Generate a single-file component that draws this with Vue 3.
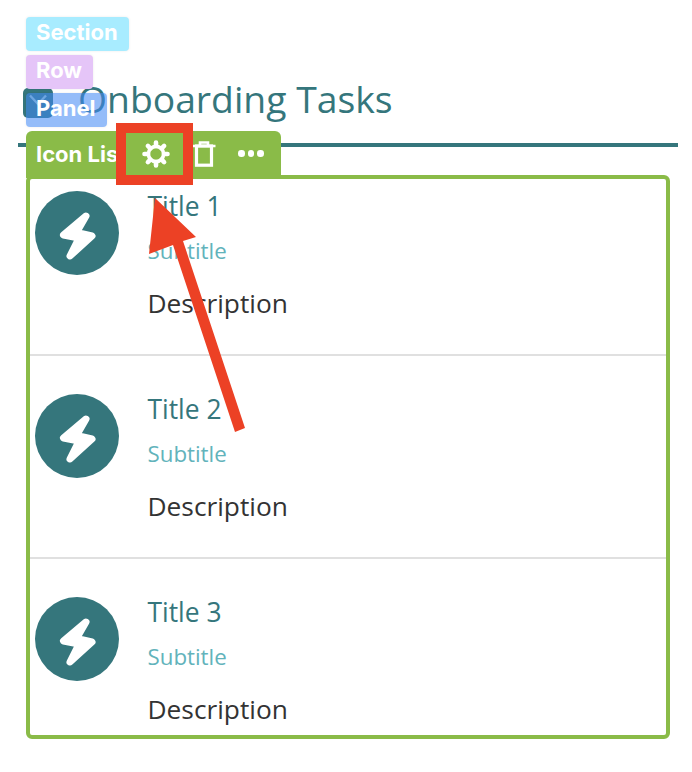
<script setup>
// De drie rijen van de lijst
const items = [
  { id: 1, title: 'Title 1' },
  { id: 2, title: 'Title 2' },
  { id: 3, title: 'Title 3' }
]
</script>

<template>
  <div class="page">
    <!-- Kop -->
    <h1 class="heading">Onboarding Tasks</h1>
    <div class="rule"></div>

    <!-- Lijst met rijen -->
    <div class="list">
      <div v-for="item in items" :key="item.id" class="row">
        <div class="avatar">
          <svg width="84" height="84" viewBox="0 0 84 84">
            <path d="M51 25 L28.5 44 L44 47 L35 65 L57 45 L41.5 41.5 Z" fill="#fff" stroke="#fff" stroke-width="7" stroke-linejoin="round" />
          </svg>
        </div>
        <div class="text">
          <div class="title">{{ item.title }}</div>
          <div class="subtitle">Subtitle</div>
          <div class="description">Description</div>
        </div>
      </div>
    </div>

    <!-- Checkbox ligt onder de labels -->
    <div class="check">
      <svg width="20" height="20" viewBox="0 0 20 20">
        <path d="M2 3.5 L10 12 L18 3.5" fill="none" stroke="#a8ccc6" stroke-width="2.4" />
      </svg>
    </div>

    <!-- Editor labels -->
    <div class="tags">
      <span class="tag section">Section</span>
      <span class="tag rowtag">Row</span>
      <span class="tag panel">Panel</span>
    </div>

    <!-- Groene toolbar -->
    <div class="toolbar">
      <span class="tool-name">Icon List</span>
      <div class="tool gear">
        <svg width="30" height="30" viewBox="0 0 30 30">
          <g stroke="#fff" stroke-width="4.6" stroke-linecap="round">
            <path d="M15 3.5V7M15 23V26.5M3.5 15H7M23 15H26.5M6.9 6.9L9.3 9.3M20.7 20.7L23.1 23.1M6.9 23.1L9.3 20.7M20.7 9.3L23.1 6.9" />
          </g>
          <circle cx="15" cy="15" r="7.6" fill="none" stroke="#fff" stroke-width="3.6" />
        </svg>
      </div>
      <div class="tool trash">
        <svg width="24" height="26" viewBox="0 0 24 26">
          <path d="M0.5 5H23.5M8 4V1.5H16V4" fill="none" stroke="#fff" stroke-width="2.6" />
          <rect x="4.5" y="5" width="15" height="19.2" fill="none" stroke="#fff" stroke-width="3.2" />
        </svg>
      </div>
      <div class="tool dots">
        <i></i><i></i><i></i>
      </div>
    </div>

    <!-- Annotatie: rood kader en pijl -->
    <div class="red-box"></div>
    <svg class="arrow" width="692" height="772" viewBox="0 0 692 772">
      <path d="M155 198 L196 237 L183 241 L245 428 L235 432 L173 245 L149 254 Z" fill="#ec4125" />
    </svg>
  </div>
</template>

<style scoped>
.page {
  position: relative;
  width: 692px;
  height: 772px;
  overflow: hidden;
  background: #fff;
  padding: 72px 14px 0 18px;
  box-sizing: border-box;
  font-family: "Open Sans", "Noto Sans", sans-serif;
}

.heading {
  margin: 0;
  height: 54px;
  line-height: 54px;
  font-size: 37.3px;
  font-weight: 400;
  color: #35767c;
  padding-left: 60px;
}

.rule {
  height: 4px;
  margin-top: 17px;
  background: #35767c;
}

.list {
  margin: 28px 8px 0 8px;
  height: 564px;
  box-sizing: border-box;
  border: 4px solid #8abb48;
  border-radius: 6px;
}

.row {
  display: flex;
  height: 203px;
  box-sizing: border-box;
  padding: 38px 0 0 5px;
  border-bottom: 2px solid #e0e0e0;
}

.row:first-child {
  height: 177px;
  padding-top: 12px;
}

.row:last-child {
  border-bottom: none;
}

.avatar {
  width: 84px;
  height: 84px;
  border-radius: 50%;
  background: #35767c;
  flex-shrink: 0;
}

.avatar svg {
  display: block;
}

.text {
  margin-top: -3px;
  margin-left: 28.5px;
}

.title {
  font-size: 26.4px;
  line-height: 36px;
  color: #35767c;
}

.subtitle {
  margin-top: 12px;
  font-size: 22.3px;
  line-height: 30px;
  color: #62b3bb;
}

.description {
  margin-top: 19px;
  font-size: 26.3px;
  line-height: 36px;
  color: #333;
}

.tags {
  position: absolute;
  left: 26px;
  top: 17px;
  display: flex;
  flex-direction: column;
  align-items: flex-start;
  gap: 4px;
}

.tag {
  height: 34px;
  line-height: 31px;
  padding: 0 11px 0 10px;
  border-radius: 4px;
  color: #fff;
  font-family: Inter, sans-serif;
  font-size: 22px;
  font-weight: 700;
  box-shadow: 0 0 3px rgba(0, 0, 0, 0.08);
}

.section {
  background: #a8ecff;
}

.rowtag {
  background: #e5c5f8;
}

.panel {
  background: rgba(64, 136, 245, 0.56);
}

.check {
  position: absolute;
  left: 23px;
  top: 88px;
  width: 30px;
  height: 30px;
  box-sizing: border-box;
  padding-top: 4px;
  border-radius: 5px;
  background: #35767c;
  display: flex;
  align-items: flex-start;
  justify-content: center;
}

.toolbar {
  position: absolute;
  left: 26px;
  top: 131px;
  width: 255px;
  height: 47px;
  box-sizing: border-box;
  padding-bottom: 2px;
  display: flex;
  align-items: center;
  background: #8abb48;
  border-radius: 6px 6px 0 0;
  overflow: hidden;
}

.tool-name {
  width: 100px;
  flex-shrink: 0;
  padding-left: 10px;
  box-sizing: border-box;
  white-space: nowrap;
  overflow: hidden;
  color: #fff;
  font-family: Inter, sans-serif;
  font-size: 22px;
  font-weight: 700;
}

.tool {
  display: flex;
  align-items: center;
  justify-content: center;
}

.gear {
  width: 60px;
}

.trash {
  width: 24px;
  margin-left: 6px;
}

.dots {
  gap: 3px;
  margin-left: 22px;
}

.dots i {
  width: 6.5px;
  height: 6.5px;
  border-radius: 50%;
  background: #fff;
}

.red-box {
  position: absolute;
  left: 116px;
  top: 123px;
  width: 77px;
  height: 62px;
  box-sizing: border-box;
  border: 10px solid #ec4125;
}

.arrow {
  position: absolute;
  left: 0;
  top: 0;
  pointer-events: none;
}
</style>
